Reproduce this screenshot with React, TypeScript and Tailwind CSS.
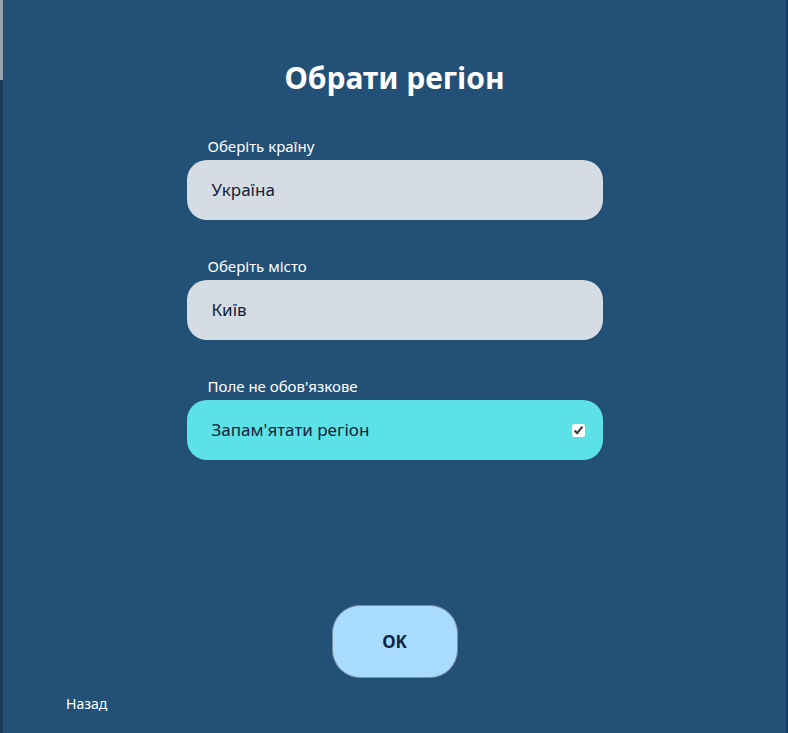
import { useState } from 'react'

type FieldProps = { label: string; value: string }

function Field({ label, value }: FieldProps) {
  return (
    <div className="flex w-[416px] flex-col">
      <span className="mb-1 pl-[21px] text-[15px] leading-5 text-white">{label}</span>
      <div className="flex h-[60px] items-center rounded-[20px] bg-[#d5dce3] px-[25px] text-[17px] text-[#13233a]">
        {value}
      </div>
    </div>
  )
}

export default function App() {
  const [remember, setRemember] = useState(true)

  return (
    <div className="flex h-[733px] w-full bg-[#235077] font-['Noto_Sans','Open_Sans',sans-serif]">
      <div className="flex w-[3px] flex-col">
        <div className="h-[80px] bg-[#9aa3ad]" />
        <div className="flex-1 bg-[#1c3a5a]" />
      </div>

      <div className="flex flex-1 flex-col">
        <div className="flex flex-col items-center pt-[58px]">
          <h1 className="text-[30px] font-bold leading-10 text-white">Обрати регіон</h1>

          <div className="mt-[38px] flex flex-col gap-9">
            <Field label="Оберіть країну" value="Україна" />
            <Field label="Оберіть місто" value="Київ" />

            <div className="flex w-[416px] flex-col">
              <span className="mb-1 pl-[21px] text-[15px] leading-5 text-white">Поле не обов'язкове</span>
              <label className="flex h-[60px] cursor-pointer items-center justify-between rounded-[20px] bg-[#5ce1e6] pl-[25px] pr-[18px] text-[17px] text-[#13233a]">
                <span>Запам'ятати регіон</span>
                <input
                  type="checkbox"
                  checked={remember}
                  onChange={() => setRemember(!remember)}
                  className="h-[13px] w-[13px] accent-white"
                />
              </label>
            </div>
          </div>

          <button className="mt-[145px] h-[73px] w-[126px] rounded-[28px] border border-[#7b8da0] bg-[#a9dbff] text-[17px] font-bold text-[#0f2740]">
            OK
          </button>
        </div>

        <div className="mt-[16px] pl-[63px] text-[14px] leading-5 text-white">Назад</div>
      </div>

      <div className="w-[2px] bg-[#1c3a5a]" />
    </div>
  )
}
